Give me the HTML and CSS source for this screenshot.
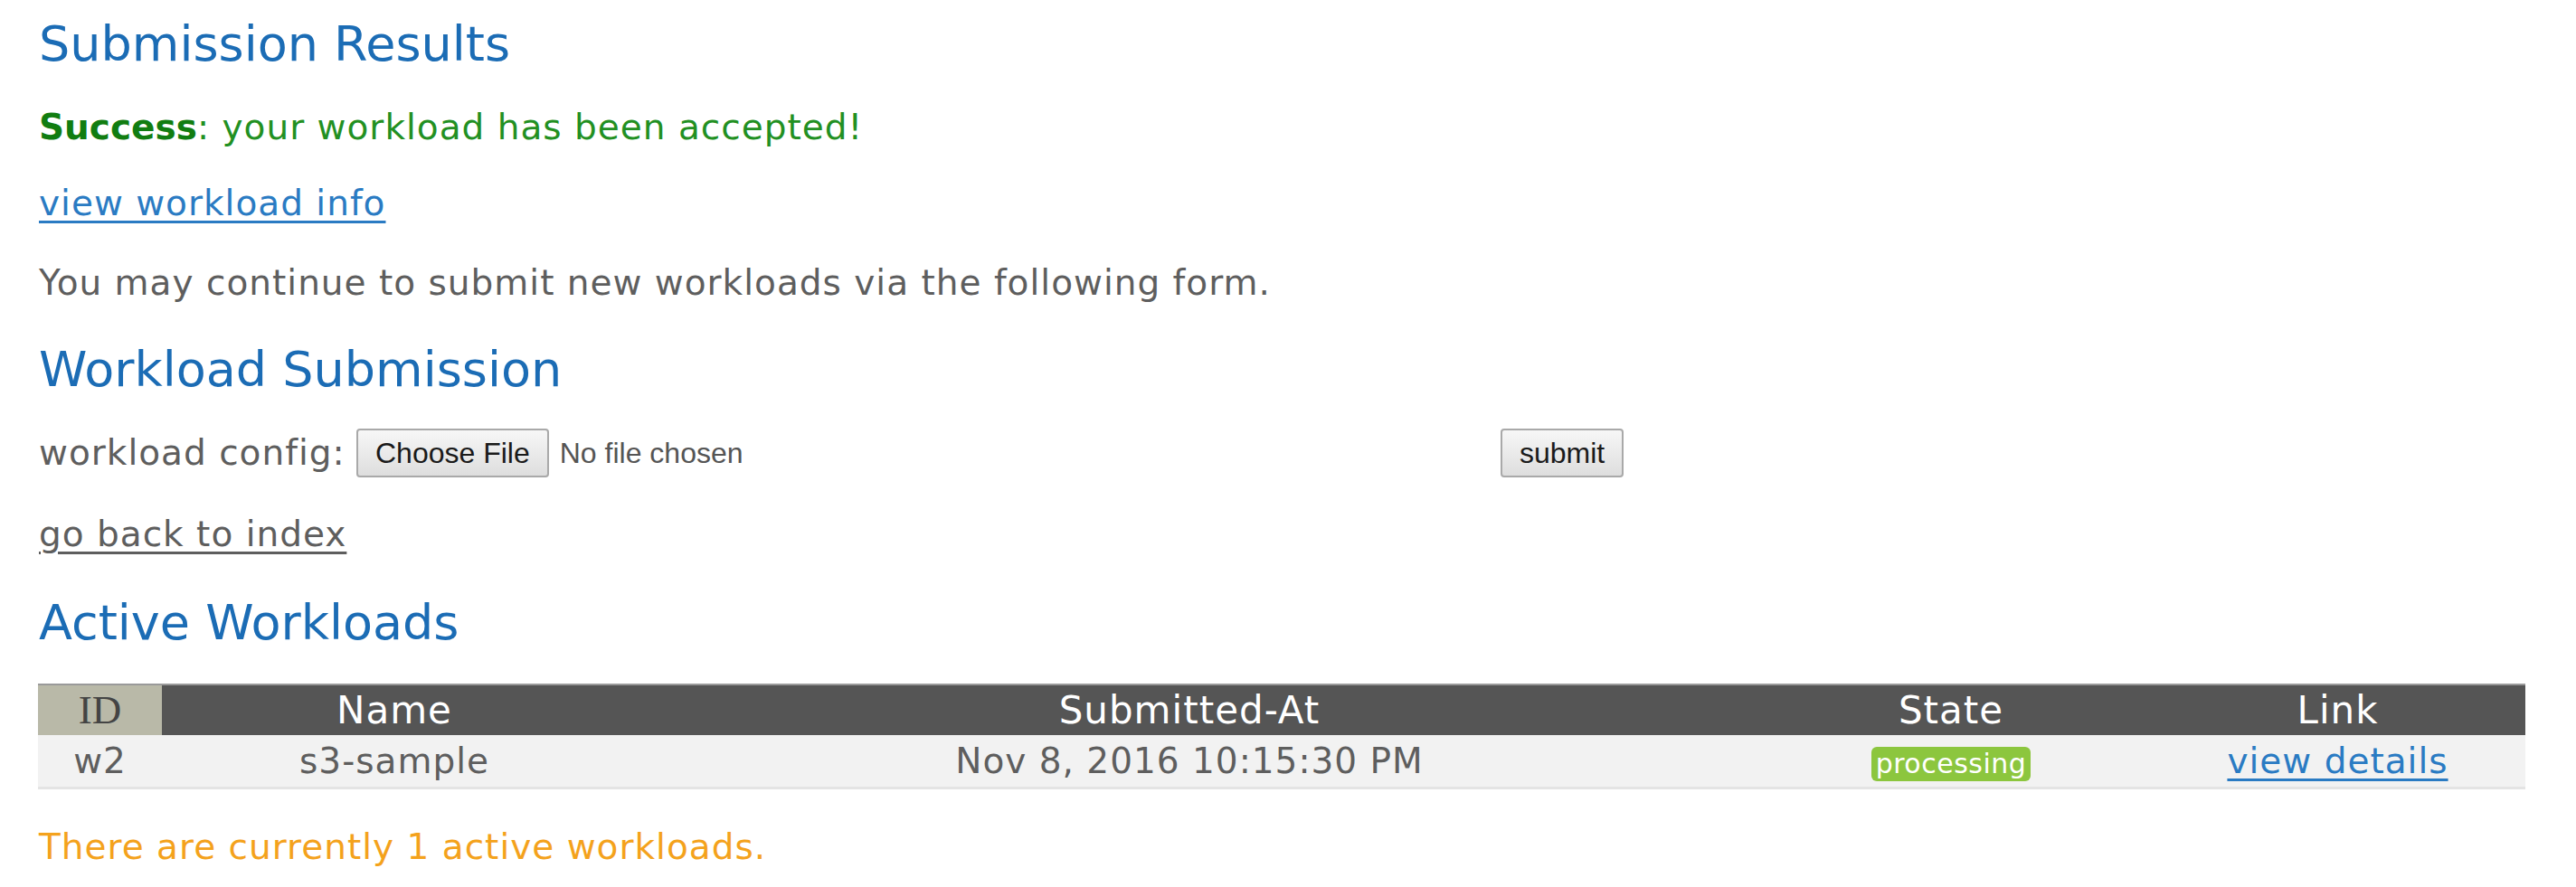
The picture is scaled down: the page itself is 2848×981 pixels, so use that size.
FILE: index.html
```html
<!DOCTYPE html>
<html lang="en">
<head>
<meta charset="utf-8">
<title>Submission Results</title>
<link rel="stylesheet" href="styles.css">
</head>
<body>
<div class="page">
  <h1 class="heading first">Submission Results</h1>
  <p class="msg success"><strong>Success</strong>: your workload has been accepted!</p>
  <p class="msg info"><a class="link" href="#">view workload info</a></p>
  <p class="msg note">You may continue to submit new workloads via the following form.</p>

  <h2 class="heading section">Workload Submission</h2>
  <form class="form-row">
    <span class="label">workload config:</span>
    <span class="file-input">
      <button type="button" class="btn">Choose File</button>
      <span class="file-name">No file chosen</span>
    </span>
    <button type="button" class="btn">submit</button>
  </form>
  <p class="msg back"><a class="link-gray" href="#">go back to index</a></p>

  <h2 class="heading active">Active Workloads</h2>
  <table class="workloads">
    <colgroup>
      <col class="c-id"><col class="c-name"><col class="c-date"><col class="c-state"><col class="c-link">
    </colgroup>
    <thead>
      <tr>
        <th class="th-id">ID</th>
        <th>Name</th>
        <th>Submitted-At</th>
        <th>State</th>
        <th>Link</th>
      </tr>
    </thead>
    <tbody>
      <tr>
        <td>w2</td>
        <td>s3-sample</td>
        <td>Nov 8, 2016 10:15:30 PM</td>
        <td><span class="badge">processing</span></td>
        <td><a class="link" href="#">view details</a></td>
      </tr>
    </tbody>
  </table>
  <p class="msg count">There are currently 1 active workloads.</p>
</div>
</body>
</html>
```

FILE: styles.css
```css
html, body {
  margin: 0;
  padding: 0;
  background: #ffffff;
}

.page {
  padding: 0 0 0 42px;
  font-family: "DejaVu Sans", Verdana, sans-serif;
  color: #5e5e5e;
}

.heading {
  margin: 0;
  font-size: 54px;
  line-height: 64px;
  font-weight: normal;
  color: #1b6cb5;
  padding-left: 1px;
}

.first { margin-top: 17px; }
.section { margin-top: 40px; }
.active { margin-top: 42px; }

.msg {
  margin: 0;
  font-size: 39px;
  line-height: 48px;
  letter-spacing: 1px;
  padding-left: 1px;
}

.success { margin-top: 36px; color: #229022; }
.success strong { color: #117d11; font-weight: bold; letter-spacing: 0; }
.info { margin-top: 36px; }
.note { margin-top: 40px; color: #5e5e5e; }
.back { margin-top: 39px; }
.count { margin-top: 40px; color: #f4a21c; }

.link {
  color: #2a7bc3;
  text-decoration: underline;
  text-decoration-thickness: 3px;
  text-underline-offset: 6px;
}

.link-gray {
  color: #5e5e5e;
  text-decoration: underline;
  text-decoration-thickness: 3px;
  text-underline-offset: 6px;
}

.form-row {
  margin: 33px 0 0;
  height: 54px;
  display: flex;
  align-items: center;
  padding-left: 1px;
}

.label {
  font-size: 39px;
  line-height: 48px;
  letter-spacing: 1px;
  color: #5e5e5e;
  width: 351px;
  flex: none;
}

.file-input {
  display: flex;
  align-items: center;
  gap: 12px;
  width: 1265px;
  flex: none;
}

.btn {
  font-family: "Liberation Sans", Arial, sans-serif;
  font-size: 32px;
  color: #1a1a1a;
  height: 54px;
  padding: 0 19px;
  margin: 0;
  border: 2px solid #a9a9a9;
  border-radius: 4px;
  background: linear-gradient(#f7f7f7, #dedede);
  line-height: 50px;
}

.file-name {
  font-family: "Liberation Sans", Arial, sans-serif;
  font-size: 32px;
  color: #555555;
}

.workloads {
  margin-top: 35px;
  width: 2750px;
  border-collapse: collapse;
  table-layout: fixed;
}

.c-id { width: 137px; }
.c-name { width: 514px; }
.c-date { width: 1244px; }
.c-state { width: 440px; }
.c-link { width: 415px; }

.workloads th {
  background: #555555;
  color: #ffffff;
  font-weight: normal;
  font-size: 42px;
  letter-spacing: 1px;
  height: 55px;
  padding: 0;
  text-align: center;
  border-top: 2px solid #9a9a9a;
  line-height: 53px;
}

.workloads th.th-id {
  background: #b9b9a8;
  color: #444444;
  font-family: "Liberation Serif", "Times New Roman", serif;
  font-size: 45px;
  letter-spacing: 0;
}

.workloads td {
  background: #f2f2f2;
  height: 57px;
  padding: 0;
  text-align: center;
  font-size: 39px;
  letter-spacing: 1px;
  color: #5e5e5e;
  border-bottom: 3px solid #e4e4e4;
  line-height: 57px;
}

.badge {
  display: inline-block;
  background: #8cc63e;
  color: #ffffff;
  font-size: 30px;
  letter-spacing: 0.5px;
  line-height: 38px;
  padding: 0 5px;
  border-radius: 6px;
  vertical-align: middle;
}
```
